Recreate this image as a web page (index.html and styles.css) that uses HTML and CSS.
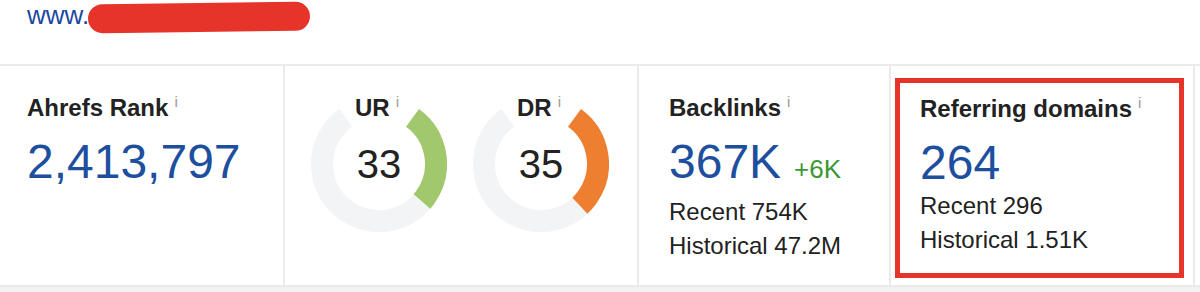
FILE: index.html
```html
<!DOCTYPE html>
<html lang="en">
<head>
<meta charset="UTF-8" />
<title>Site overview</title>
<link rel="stylesheet" href="styles.css">
</head>
<body>

<!-- URL -->
<div class="site">
    <span class="url">www.</span><span class="redact"></span>
</div>

<!-- METRICS -->
<div class="stats">

    <div class="cell">
        <div class="label">Ahrefs Rank<sup class="info">i</sup></div>
        <div class="big">2,413,797</div>
    </div>

    <div class="cell gauges">
        <div class="gauge">
            <svg viewBox="0 0 136 136" width="136" height="136">
                <circle class="track" cx="68" cy="68" r="57" stroke-dasharray="286.5 400" transform="rotate(-54 68 68)"/>
                <circle class="fill green" cx="68" cy="68" r="57" stroke-dasharray="94.5 400" transform="rotate(-54 68 68)"/>
            </svg>
            <div class="label gauge-label">UR<sup class="info">i</sup></div>
            <div class="gauge-value">33</div>
        </div>
        <div class="gauge">
            <svg viewBox="0 0 136 136" width="136" height="136">
                <circle class="track" cx="68" cy="68" r="57" stroke-dasharray="286.5 400" transform="rotate(-54 68 68)"/>
                <circle class="fill orange" cx="68" cy="68" r="57" stroke-dasharray="100.3 400" transform="rotate(-54 68 68)"/>
            </svg>
            <div class="label gauge-label">DR<sup class="info">i</sup></div>
            <div class="gauge-value">35</div>
        </div>
    </div>

    <div class="cell padded">
        <div class="label">Backlinks<sup class="info">i</sup></div>
        <div class="big">367K<span class="delta">+6K</span></div>
        <div class="sub">Recent 754K</div>
        <div class="sub">Historical 47.2M</div>
    </div>

    <div class="cell">
        <div class="highlight">
            <div class="label">Referring domains<sup class="info">i</sup></div>
            <div class="big">264</div>
            <div class="sub">Recent 296</div>
            <div class="sub">Historical 1.51K</div>
        </div>
    </div>

    <div class="cell"></div>

</div>

</body>
</html>
```
FILE: styles.css
```css
*{
    margin:0;
    padding:0;
    box-sizing:border-box;
}

:root{
    --line:#ebebec;
    --blue:#1e4f9f;
    --text:#222;
    --muted:#999;
    --red:#e6342a;
}

body{
    font-family:"Liberation Sans",Arial,sans-serif;
    background:#f2f2f3;
    color:var(--text);
}

.site{
    height:64px;
    background:white;
    padding:0 0 0 27px;
    font-size:26px;
    line-height:31px;
    white-space:nowrap;
}

.url{
    color:#1b48a0;
}

.redact{
    display:inline-block;
    width:222px;
    height:29px;
    margin-left:-1px;
    vertical-align:-8px;
    border-radius:15px;
    background:var(--red);
    transform:rotate(-0.7deg);
}

.stats{
    display:grid;
    grid-template-columns:283px 354px 252px 304px 1fr;
    height:223px;
    background:white;
    border-top:2px solid var(--line);
    border-bottom:2px solid var(--line);
}

.cell{
    padding:28px 0 0 27px;
}

.cell + .cell{
    border-left:2px solid var(--line);
    padding:28px 0 0 30px;
}

.label{
    font-size:24px;
    line-height:28px;
    font-weight:700;
    white-space:nowrap;
}

.info{
    font-size:15px;
    line-height:1;
    font-weight:400;
    color:var(--muted);
    vertical-align:top;
    margin-left:6px;
}

.big{
    margin-top:14px;
    font-size:48px;
    line-height:52px;
    color:var(--blue);
    white-space:nowrap;
}

.delta{
    margin-left:13px;
    font-size:26px;
    color:#3a9833;
}

.sub{
    font-size:24px;
    line-height:34px;
    white-space:nowrap;
}

.sub:first-of-type{
    margin-top:4px;
}

/* gauges */

.cell.gauges{
    display:flex;
    gap:26px;
    padding:30px 0 0 26px;
}

.gauge{
    position:relative;
    width:136px;
    height:136px;
}

.gauge svg{
    display:block;
}

.track,
.fill{
    fill:none;
    stroke-width:22;
}

.track{
    stroke:#f3f4f6;
}

.green{
    stroke:#a2c86d;
}

.orange{
    stroke:#ee7f31;
}

.gauge-label{
    position:absolute;
    top:-2px;
    left:0;
    right:4px;
    text-align:center;
}

.gauge-value{
    position:absolute;
    inset:0;
    display:flex;
    align-items:center;
    justify-content:center;
    font-size:40px;
    line-height:40px;
    color:var(--text);
}

/* annotation box */

.cell:has(.highlight){
    padding:12px 9px 7px 4px;
}

.highlight{
    height:100%;
    border:5px solid var(--red);
    padding:12px 0 0 20px;
}
```
